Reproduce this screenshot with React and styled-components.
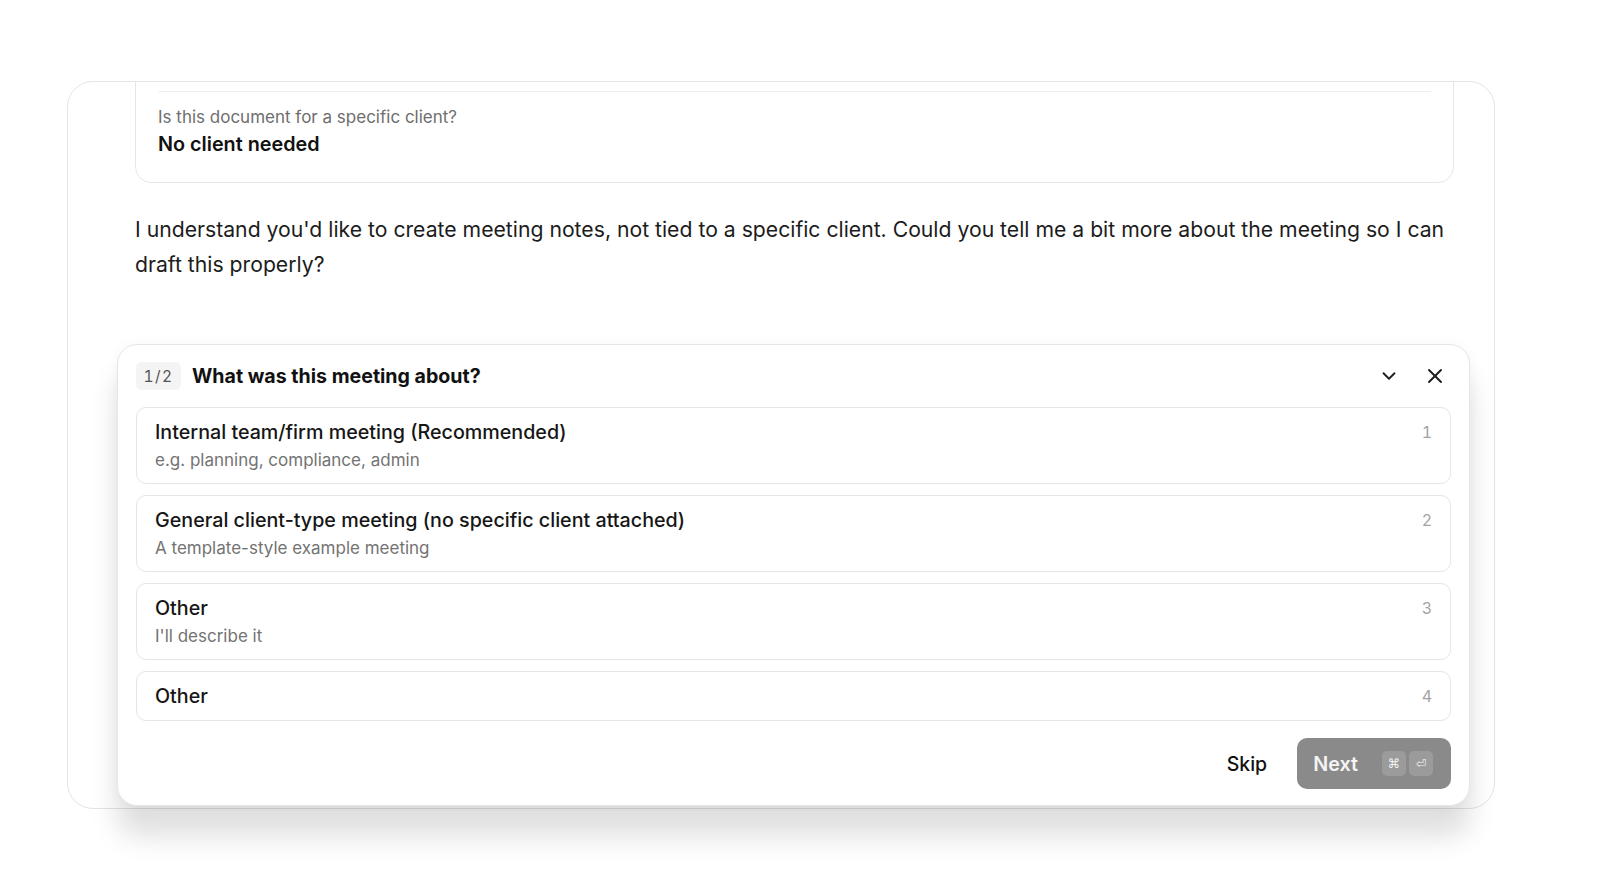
import React from "react";
import styled, { createGlobalStyle } from "styled-components";
import { ChevronDown, X } from "lucide-react";

const GlobalStyle = createGlobalStyle`
  html, body {
    margin: 0;
    padding: 0;
    background: #ffffff;
  }
  body {
    font-family: Inter, "Noto Sans", "Liberation Sans", sans-serif;
    color: #1a1a1a;
    -webkit-font-smoothing: antialiased;
  }
  * { box-sizing: border-box; }
`;

const Page = styled.div`
  padding: 81px 0 0 67px;
  min-height: 889px;
`;

const ChatPanel = styled.section`
  width: 1428px;
  height: 728px;
  border: 1px solid #e4e4e4;
  border-radius: 26px;
  background: #fff;
  display: flex;
  flex-direction: column;
  padding: 0 24px 0 49px;
`;

/* message history, pinned to the bottom and clipped at the top */
const Thread = styled.div`
  flex: 1;
  min-height: 0;
  overflow: hidden;
  display: flex;
  flex-direction: column;
  justify-content: flex-end;
  padding: 0 16px 62px 18px;
`;

const AnswerCard = styled.div`
  flex: none;
  border: 1px solid #e7e7e7;
  border-radius: 16px;
  padding: 40px 22px 0;
  display: flex;
  flex-direction: column;
`;

const AnswerRow = styled.div`
  display: flex;
  flex-direction: column;
  gap: 1px;
  padding: 13px 0 24px;
  border-top: ${(p) => (p.$divided ? "1px solid #efefef" : "none")};
`;

const AnswerQuestion = styled.div`
  font-size: 17px;
  line-height: 24px;
  color: #6e6e6e;
`;

const AnswerValue = styled.div`
  font-size: 19.8px;
  line-height: 28px;
  font-weight: 600;
  color: #111;
`;

const Message = styled.p`
  flex: none;
  margin: 29px 0 0;
  font-size: 21.2px;
  line-height: 35px;
  color: #1c1c1c;
`;

/* the pending question, floating over the panel's bottom edge */
const QuestionCard = styled.div`
  position: relative;
  z-index: 1;
  flex: none;
  margin-bottom: 2px;
  border: 1px solid #e6e6e6;
  border-radius: 20px;
  background: #fff;
  padding: 17px 18px 16px;
  display: flex;
  flex-direction: column;
  box-shadow: 0 30px 28px rgba(0, 0, 0, 0.13), 0 0 14px rgba(0, 0, 0, 0.035);
`;

const Header = styled.div`
  display: flex;
  align-items: center;
  height: 28px;
  gap: 11px;
`;

const StepBadge = styled.span`
  display: inline-flex;
  align-items: center;
  justify-content: center;
  width: 45px;
  height: 28px;
  border-radius: 6px;
  background: #f4f4f4;
  color: #555;
  font-size: 15.5px;
  letter-spacing: 1.5px;
  font-variant-numeric: tabular-nums;
`;

const Title = styled.h2`
  flex: 1;
  margin: 0;
  font-size: 19.6px;
  line-height: 28px;
  font-weight: 700;
  color: #111;
`;

const HeaderActions = styled.div`
  display: flex;
  align-items: center;
  gap: 14px;
`;

const IconButton = styled.button`
  width: 32px;
  height: 32px;
  display: inline-flex;
  align-items: center;
  justify-content: center;
  border: none;
  background: transparent;
  color: #1d1d1d;
  padding: 0;
  cursor: pointer;
`;

const Options = styled.div`
  display: flex;
  flex-direction: column;
  gap: 11px;
  margin-top: 17px;
`;

const Option = styled.button`
  display: flex;
  align-items: flex-start;
  justify-content: space-between;
  width: 100%;
  text-align: left;
  border: 1px solid #e6e6e6;
  border-radius: 10px;
  background: #fff;
  padding: ${(p) => (p.$compact ? "11px 18px 11px" : "11px 18px 12px")};
  font-family: inherit;
  cursor: pointer;
`;

const OptionText = styled.div`
  display: flex;
  flex-direction: column;
  gap: 4px;
`;

const OptionTitle = styled.span`
  font-size: 19.7px;
  line-height: 26px;
  font-weight: 500;
  color: #161616;
`;

const OptionHint = styled.span`
  font-size: 17px;
  line-height: 22px;
  color: #737373;
`;

const OptionKey = styled.span`
  font-size: 16px;
  line-height: 26px;
  color: #a3a3a3;
  font-variant-numeric: tabular-nums;
`;

const Footer = styled.div`
  display: flex;
  justify-content: flex-end;
  align-items: center;
  gap: 30px;
  margin-top: 17px;
`;

const SkipButton = styled.button`
  border: none;
  background: transparent;
  padding: 0;
  font-family: inherit;
  font-size: 19.5px;
  font-weight: 500;
  color: #111;
  cursor: pointer;
`;

const NextButton = styled.button`
  display: inline-flex;
  align-items: center;
  height: 51px;
  padding: 0 18px 0 16px;
  border: none;
  border-radius: 10px;
  background: #8a8a8a;
  color: #f4f4f4;
  font-family: inherit;
  font-size: 19.8px;
  font-weight: 600;
  cursor: pointer;
`;

const Keys = styled.span`
  display: inline-flex;
  gap: 3px;
  margin-left: 24px;
`;

const Key = styled.kbd`
  display: inline-flex;
  align-items: center;
  justify-content: center;
  width: 24px;
  height: 25px;
  border-radius: 5px;
  background: rgba(255, 255, 255, 0.15);
  color: #f2f2f2;
  font-family: "DejaVu Sans", Inter, sans-serif;
  font-size: 12.5px;
  font-weight: 400;
`;

const options = [
  { title: "Internal team/firm meeting (Recommended)", hint: "e.g. planning, compliance, admin" },
  { title: "General client-type meeting (no specific client attached)", hint: "A template-style example meeting" },
  { title: "Other", hint: "I'll describe it" },
  { title: "Other" },
];

export default function App() {
  return (
    <>
      <GlobalStyle />
      <Page>
        <ChatPanel>
          <Thread>
            <AnswerCard>
              <AnswerRow $divided>
                <AnswerQuestion>Is this document for a specific client?</AnswerQuestion>
                <AnswerValue>No client needed</AnswerValue>
              </AnswerRow>
            </AnswerCard>
            <Message>
              I understand you'd like to create meeting notes, not tied to a specific client. Could you tell me a bit
              more about the meeting so I can draft this properly?
            </Message>
          </Thread>

          <QuestionCard>
            <Header>
              <StepBadge>1/2</StepBadge>
              <Title>What was this meeting about?</Title>
              <HeaderActions>
                <IconButton aria-label="Collapse">
                  <ChevronDown size={22} strokeWidth={2} />
                </IconButton>
                <IconButton aria-label="Close">
                  <X size={24} strokeWidth={1.9} />
                </IconButton>
              </HeaderActions>
            </Header>

            <Options>
              {options.map((o, i) => (
                <Option key={i} $compact={!o.hint}>
                  <OptionText>
                    <OptionTitle>{o.title}</OptionTitle>
                    {o.hint && <OptionHint>{o.hint}</OptionHint>}
                  </OptionText>
                  <OptionKey>{i + 1}</OptionKey>
                </Option>
              ))}
            </Options>

            <Footer>
              <SkipButton>Skip</SkipButton>
              <NextButton>
                Next
                <Keys>
                  <Key>⌘</Key>
                  <Key>⏎</Key>
                </Keys>
              </NextButton>
            </Footer>
          </QuestionCard>
        </ChatPanel>
      </Page>
    </>
  );
}
